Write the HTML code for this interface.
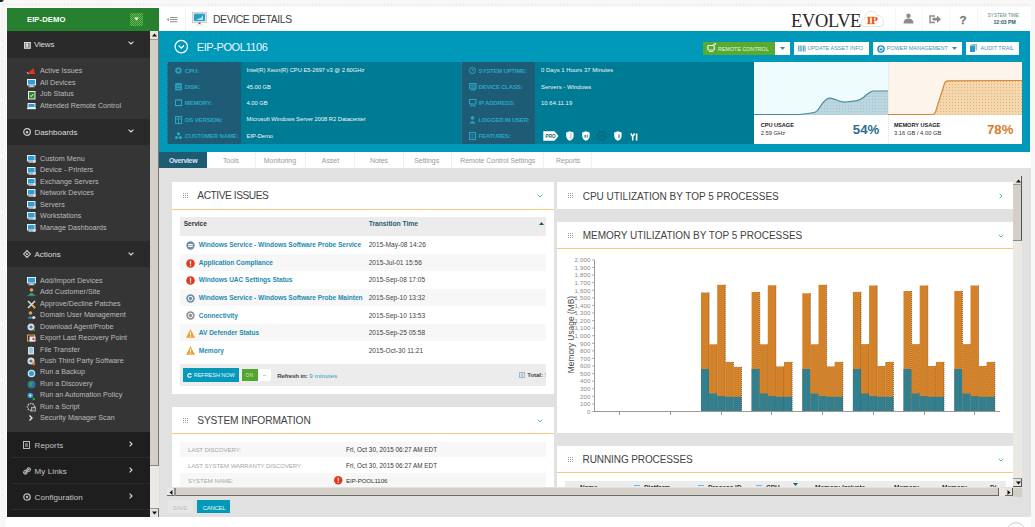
<!DOCTYPE html>
<html><head><meta charset="utf-8">
<style>
*{margin:0;padding:0;box-sizing:border-box}
html,body{width:1035px;height:527px;overflow:hidden;background:#f7f7f7;font-family:"Liberation Sans",sans-serif}
.a{position:absolute}
.t{position:absolute;white-space:nowrap;line-height:1}
svg{overflow:visible}
</style></head><body>
<div class="a" style="left:6px;top:7px;width:1025px;height:520px;background:#fff;"></div>
<div class="a" style="left:3px;top:4px;width:1028px;height:1px;background:transparent;background-image:linear-gradient(90deg,#dedede 1px,transparent 1px);background-size:3.6px 1px"></div>
<div class="a" style="left:2px;top:5px;width:1px;height:522px;background:transparent;background-image:linear-gradient(#e2e2e2 1px,transparent 1px);background-size:1px 7px"></div>
<svg class="a" style="left:0px;top:0px;" width="4" height="3" viewBox="0 0 4 3"><ellipse cx="0.5" cy="0" rx="3" ry="2" fill="#222"/></svg>
<div class="a" style="left:7px;top:8px;width:152px;height:23px;background:#27802f;"></div>
<div class="t" style="left:27px;top:15.93px;font-size:7.7px;color:#fff;font-weight:bold;letter-spacing:0.05px;">EIP-DEMO</div>
<div class="a" style="left:130px;top:13px;width:13px;height:12.5px;background:#45a03d;background:repeating-conic-gradient(#5fba4a 0 25%,#2e8a33 0 50%) 0 0/2px 2px"></div>
<svg class="a" style="left:134px;top:17px;" width="5" height="4" viewBox="0 0 5 4"><path d="M0.3 0.5 H4.7 L2.5 3.5Z" fill="#fff"/></svg>
<div class="a" style="left:7px;top:31px;width:143px;height:27px;background:#2a2a2a;"></div>
<div class="a" style="left:7px;top:58px;width:143px;height:61px;background:#353535;"></div>
<div class="a" style="left:7px;top:119px;width:143px;height:26px;background:#2a2a2a;"></div>
<div class="a" style="left:7px;top:145px;width:143px;height:96px;background:#353535;"></div>
<div class="a" style="left:7px;top:241px;width:143px;height:26px;background:#2a2a2a;"></div>
<div class="a" style="left:7px;top:267px;width:143px;height:165px;background:#353535;"></div>
<div class="a" style="left:7px;top:432px;width:143px;height:85px;background:#1e1e1e;"></div>
<div class="a" style="left:12px;top:457px;width:138px;height:1px;background:transparent;border-top:1px dotted #363636"></div>
<div class="a" style="left:12px;top:483px;width:138px;height:1px;background:transparent;border-top:1px dotted #363636"></div>
<div class="a" style="left:12px;top:509px;width:138px;height:1px;background:transparent;border-top:1px dotted #363636"></div>
<svg class="a" style="left:23.7px;top:41.7px;" width="7" height="7" viewBox="0 0 7 7"><rect x="0.5" y="0.5" width="5.8" height="5.8" fill="#8a8a8a" stroke="#d8d8d8" stroke-width="1"/><rect x="2.3" y="1.5" width="1.6" height="3.8" fill="#e8e8e8"/></svg>
<div class="t" style="left:34px;top:41.38px;font-size:8px;color:#dcdcdc;letter-spacing:-0.2px;">Views</div>
<svg class="a" style="left:127.5px;top:41.0px;" width="6" height="4" viewBox="0 0 6 4"><path d="M0.6 0.6 L3 3 L5.4 0.6" fill="none" stroke="#e0e0e0" stroke-width="1.1"/></svg>
<svg class="a" style="left:23px;top:128px;" width="8" height="8" viewBox="0 0 8 8"><circle cx="4" cy="4" r="3.3" fill="none" stroke="#ccc" stroke-width="1.2"/><circle cx="4" cy="4.3" r="1.2" fill="#ccc"/></svg>
<div class="t" style="left:34.4px;top:129.08px;font-size:8px;color:#dcdcdc;letter-spacing:0px;">Dashboards</div>
<svg class="a" style="left:127.5px;top:128.5px;" width="6" height="4" viewBox="0 0 6 4"><path d="M0.6 0.6 L3 3 L5.4 0.6" fill="none" stroke="#e0e0e0" stroke-width="1.1"/></svg>
<svg class="a" style="left:23px;top:250px;" width="8" height="8" viewBox="0 0 8 8"><path d="M4 0.6 L7.4 4 L4 7.4 L0.6 4Z" fill="none" stroke="#ccc" stroke-width="1.1"/><circle cx="4" cy="4" r="1.1" fill="#ccc"/></svg>
<div class="t" style="left:34.4px;top:251.08px;font-size:8px;color:#dcdcdc;letter-spacing:0px;">Actions</div>
<svg class="a" style="left:127.5px;top:251.5px;" width="6" height="4" viewBox="0 0 6 4"><path d="M0.6 0.6 L3 3 L5.4 0.6" fill="none" stroke="#e0e0e0" stroke-width="1.1"/></svg>
<svg class="a" style="left:23px;top:441px;" width="7" height="8" viewBox="0 0 7 8"><rect x="0.5" y="0.5" width="6" height="7" fill="none" stroke="#bbb" stroke-width="1"/><path d="M2 3H5M2 5H5" stroke="#bbb"/></svg>
<div class="t" style="left:34.6px;top:441.68px;font-size:8px;color:#c6c6c6;letter-spacing:0.1px;">Reports</div>
<svg class="a" style="left:128.5px;top:440.5px;" width="4" height="6" viewBox="0 0 4 6"><path d="M0.6 0.6 L3 3 L0.6 5.4" fill="none" stroke="#e0e0e0" stroke-width="1.1"/></svg>
<svg class="a" style="left:23px;top:467px;" width="8" height="8" viewBox="0 0 8 8"><path d="M1.5 6.5 L6.5 1.5" stroke="#bbb" stroke-width="1.2"/><rect x="0.6" y="3.6" width="3.5" height="3.5" rx="1.5" fill="none" stroke="#bbb" transform="rotate(-45 2.3 5.3)"/><rect x="3.9" y="0.9" width="3.5" height="3.5" rx="1.5" fill="none" stroke="#bbb" transform="rotate(-45 5.6 2.6)"/></svg>
<div class="t" style="left:34.6px;top:467.58px;font-size:8px;color:#c6c6c6;letter-spacing:0.1px;">My Links</div>
<svg class="a" style="left:128.5px;top:466.5px;" width="4" height="6" viewBox="0 0 4 6"><path d="M0.6 0.6 L3 3 L0.6 5.4" fill="none" stroke="#e0e0e0" stroke-width="1.1"/></svg>
<svg class="a" style="left:23px;top:493px;" width="8" height="8" viewBox="0 0 8 8"><circle cx="4" cy="4" r="3.2" fill="none" stroke="#bbb" stroke-width="1.3"/><circle cx="4" cy="4" r="1.2" fill="#bbb"/></svg>
<div class="t" style="left:34.6px;top:493.58px;font-size:8px;color:#c6c6c6;letter-spacing:0.05px;">Configuration</div>
<svg class="a" style="left:128.5px;top:492.5px;" width="4" height="6" viewBox="0 0 4 6"><path d="M0.6 0.6 L3 3 L0.6 5.4" fill="none" stroke="#e0e0e0" stroke-width="1.1"/></svg>
<svg class="a" style="left:27px;top:68px;" width="8" height="6" viewBox="0 0 8 6"><path d="M0 6 L8 6 L6.5 0 Z" fill="#e8321e"/><path d="M0 4 L1.5 6" stroke="#eee" stroke-width="0.8"/></svg>
<div class="t" style="left:40px;top:68.10px;font-size:7.15px;color:#bcbcbc;letter-spacing:0.02px;">Active Issues</div>
<svg class="a" style="left:27px;top:79px;" width="9" height="8" viewBox="0 0 9 8"><rect x="0.5" y="0.5" width="8" height="5.5" fill="#2a9fd6" stroke="#eee" stroke-width="1"/><rect x="3" y="6.5" width="3" height="1" fill="#ddd"/><rect x="1.5" y="7.3" width="6" height="0.9" fill="#eee"/></svg>
<div class="t" style="left:40px;top:79.60px;font-size:7.15px;color:#bcbcbc;letter-spacing:0.02px;">All Devices</div>
<svg class="a" style="left:27.5px;top:90.5px;" width="7" height="8" viewBox="0 0 7 8"><rect x="0.5" y="0.5" width="6.5" height="7.5" fill="#2a8a2a" stroke="#eee" stroke-width="1"/><path d="M2 4.5 L3.2 5.6 L5.3 3" stroke="#fff" fill="none" stroke-width="0.9"/></svg>
<div class="t" style="left:40px;top:91.00px;font-size:7.15px;color:#bcbcbc;letter-spacing:0.02px;">Job Status</div>
<svg class="a" style="left:27px;top:103px;" width="9" height="6" viewBox="0 0 9 6"><rect x="1" y="0.5" width="7" height="4" fill="#2a9fd6" stroke="#eee" stroke-width="1"/><rect x="0" y="5" width="9" height="1.2" fill="#eee"/></svg>
<div class="t" style="left:40px;top:102.80px;font-size:7.15px;color:#bcbcbc;letter-spacing:0.02px;">Attended Remote Control</div>
<svg class="a" style="left:26.5px;top:155.4px;" width="9" height="8" viewBox="0 0 9 8"><rect x="0.5" y="0.5" width="7.5" height="5.5" fill="#2a9fd6" stroke="#eee" stroke-width="1"/><rect x="1.5" y="6.6" width="6" height="1" fill="#eee"/><circle cx="7.5" cy="6.5" r="1.4" fill="#ddd"/></svg>
<div class="t" style="left:40px;top:156.20px;font-size:7.15px;color:#bcbcbc;letter-spacing:0.02px;">Custom Menu</div>
<svg class="a" style="left:26.5px;top:166.5px;" width="9" height="8" viewBox="0 0 9 8"><rect x="0.5" y="0.5" width="7.5" height="5.5" fill="#2a9fd6" stroke="#eee" stroke-width="1"/><rect x="1.5" y="6.6" width="6" height="1" fill="#eee"/><circle cx="7.5" cy="6.5" r="1.4" fill="#ddd"/></svg>
<div class="t" style="left:40px;top:167.30px;font-size:7.15px;color:#bcbcbc;letter-spacing:0.02px;">Device - Printers</div>
<svg class="a" style="left:26.5px;top:178.1px;" width="9" height="8" viewBox="0 0 9 8"><rect x="0.5" y="0.5" width="7.5" height="5.5" fill="#2a9fd6" stroke="#eee" stroke-width="1"/><rect x="1.5" y="6.6" width="6" height="1" fill="#eee"/><circle cx="7.5" cy="6.5" r="1.4" fill="#ddd"/></svg>
<div class="t" style="left:40px;top:178.90px;font-size:7.15px;color:#bcbcbc;letter-spacing:0.02px;">Exchange Servers</div>
<svg class="a" style="left:26.5px;top:189.2px;" width="9" height="8" viewBox="0 0 9 8"><rect x="0.5" y="0.5" width="7.5" height="5.5" fill="#2a9fd6" stroke="#eee" stroke-width="1"/><rect x="1.5" y="6.6" width="6" height="1" fill="#eee"/><circle cx="7.5" cy="6.5" r="1.4" fill="#ddd"/></svg>
<div class="t" style="left:40px;top:190.00px;font-size:7.15px;color:#bcbcbc;letter-spacing:0.02px;">Network Devices</div>
<svg class="a" style="left:26.5px;top:200.9px;" width="9" height="8" viewBox="0 0 9 8"><rect x="0.5" y="0.5" width="7.5" height="5.5" fill="#2a9fd6" stroke="#eee" stroke-width="1"/><rect x="1.5" y="6.6" width="6" height="1" fill="#eee"/><circle cx="7.5" cy="6.5" r="1.4" fill="#ddd"/></svg>
<div class="t" style="left:40px;top:201.70px;font-size:7.15px;color:#bcbcbc;letter-spacing:0.02px;">Servers</div>
<svg class="a" style="left:26.5px;top:212.3px;" width="9" height="8" viewBox="0 0 9 8"><rect x="0.5" y="0.5" width="7.5" height="5.5" fill="#2a9fd6" stroke="#eee" stroke-width="1"/><rect x="1.5" y="6.6" width="6" height="1" fill="#eee"/><circle cx="7.5" cy="6.5" r="1.4" fill="#ddd"/></svg>
<div class="t" style="left:40px;top:213.10px;font-size:7.15px;color:#bcbcbc;letter-spacing:0.02px;">Workstations</div>
<svg class="a" style="left:26.5px;top:223.7px;" width="9" height="8" viewBox="0 0 9 8"><rect x="0.5" y="0.5" width="7.5" height="5.5" fill="#2a9fd6" stroke="#eee" stroke-width="1"/><rect x="1.5" y="6.6" width="6" height="1" fill="#eee"/><circle cx="7.5" cy="6.5" r="1.4" fill="#ddd"/></svg>
<div class="t" style="left:40px;top:224.50px;font-size:7.15px;color:#bcbcbc;letter-spacing:0.02px;">Manage Dashboards</div>
<svg class="a" style="left:26.5px;top:277.1px;" width="9" height="9" viewBox="0 0 9 9"><rect x="0.5" y="0.5" width="8" height="5.5" fill="#2a9fd6" stroke="#eee" stroke-width="1"/><rect x="3" y="6.5" width="3" height="1" fill="#ddd"/><rect x="1.5" y="7.3" width="6" height="0.9" fill="#eee"/></svg>
<div class="t" style="left:40px;top:277.90px;font-size:7.15px;color:#bcbcbc;letter-spacing:0.02px;">Add/Import Devices</div>
<svg class="a" style="left:26.5px;top:288.3px;" width="9" height="9" viewBox="0 0 9 9"><circle cx="4.5" cy="2" r="1.8" fill="#f0a040"/><path d="M1.5 7 Q4.5 3 7.5 7Z" fill="#2a9fd6"/><rect x="0.5" y="7.3" width="8" height="0.8" fill="#3b3"/></svg>
<div class="t" style="left:40px;top:289.10px;font-size:7.15px;color:#bcbcbc;letter-spacing:0.02px;">Add Customer/Site</div>
<svg class="a" style="left:26.5px;top:299.9px;" width="9" height="9" viewBox="0 0 9 9"><path d="M1 1 L8 8 M8 1 L1 8" stroke="#ddd" stroke-width="1.5"/><path d="M5.5 5.5 L8 8" stroke="#f0a040" stroke-width="1.8"/></svg>
<div class="t" style="left:40px;top:300.70px;font-size:7.15px;color:#bcbcbc;letter-spacing:0.02px;">Approve/Decline Patches</div>
<svg class="a" style="left:26.5px;top:311.1px;" width="9" height="9" viewBox="0 0 9 9"><circle cx="3.5" cy="2" r="1.8" fill="#f0a040"/><path d="M0.5 7.5 Q3.5 3.5 6.5 7.5Z" fill="#2a9fd6"/><circle cx="6.8" cy="6.5" r="1.6" fill="#ddd"/></svg>
<div class="t" style="left:40px;top:311.90px;font-size:7.15px;color:#bcbcbc;letter-spacing:0.02px;">Domain User Management</div>
<svg class="a" style="left:26.5px;top:322.9px;" width="9" height="9" viewBox="0 0 9 9"><circle cx="4" cy="4" r="3.5" fill="#ddd"/><circle cx="4" cy="4" r="1.6" fill="#3a7ea8"/><circle cx="7" cy="7" r="1" fill="#3b3"/></svg>
<div class="t" style="left:40px;top:323.70px;font-size:7.15px;color:#bcbcbc;letter-spacing:0.02px;">Download Agent/Probe</div>
<svg class="a" style="left:26.5px;top:334.2px;" width="9" height="9" viewBox="0 0 9 9"><rect x="0.5" y="1" width="7" height="6" fill="none" stroke="#f0a040" stroke-width="1"/><rect x="2.5" y="2.5" width="6" height="5" fill="#eee"/><circle cx="6.5" cy="5" r="1.2" fill="#e33"/></svg>
<div class="t" style="left:40px;top:335.00px;font-size:7.15px;color:#bcbcbc;letter-spacing:0.02px;">Export Last Recovery Point</div>
<svg class="a" style="left:26.5px;top:345.7px;" width="9" height="9" viewBox="0 0 9 9"><rect x="1" y="1" width="6" height="7.5" fill="#cfe3ef"/><rect x="2" y="2" width="4" height="5" fill="#9cc3dc"/><circle cx="4" cy="0.8" r="0.8" fill="#3b3"/></svg>
<div class="t" style="left:40px;top:346.50px;font-size:7.15px;color:#bcbcbc;letter-spacing:0.02px;">File Transfer</div>
<svg class="a" style="left:26.5px;top:356.9px;" width="9" height="9" viewBox="0 0 9 9"><circle cx="4" cy="4" r="3.5" fill="#ddd"/><circle cx="4" cy="4" r="1.6" fill="#3a7ea8"/><circle cx="6.8" cy="6.8" r="1.6" fill="#f07020"/></svg>
<div class="t" style="left:40px;top:357.70px;font-size:7.15px;color:#bcbcbc;letter-spacing:0.02px;">Push Third Party Software</div>
<svg class="a" style="left:26.5px;top:368.5px;" width="9" height="9" viewBox="0 0 9 9"><circle cx="4.5" cy="4.5" r="3.8" fill="#cfe3ef"/><circle cx="4.5" cy="4.5" r="2.5" fill="#2a9fd6"/></svg>
<div class="t" style="left:40px;top:369.30px;font-size:7.15px;color:#bcbcbc;letter-spacing:0.02px;">Run a Backup</div>
<svg class="a" style="left:26.5px;top:380px;" width="9" height="9" viewBox="0 0 9 9"><circle cx="4.5" cy="4.5" r="4" fill="#2f6fa8"/><path d="M2 3 Q4 1 6 3 Q5 6 3 7" fill="#3a3" /></svg>
<div class="t" style="left:40px;top:380.80px;font-size:7.15px;color:#bcbcbc;letter-spacing:0.02px;">Run a Discovery</div>
<svg class="a" style="left:26.5px;top:391.5px;" width="9" height="9" viewBox="0 0 9 9"><circle cx="3.3" cy="3.5" r="2.8" fill="#2a9fd6"/><circle cx="3.3" cy="3.5" r="1" fill="#fff"/><path d="M5.5 6 L8 7 L5.5 8" stroke="#3b3" fill="none" stroke-width="1"/></svg>
<div class="t" style="left:40px;top:392.30px;font-size:7.15px;color:#bcbcbc;letter-spacing:0.02px;">Run an Automation Policy</div>
<svg class="a" style="left:26.5px;top:402.8px;" width="9" height="9" viewBox="0 0 9 9"><circle cx="4" cy="4" r="3.5" fill="none" stroke="#bbb" stroke-width="1.6" stroke-dasharray="1.5 1"/><rect x="4.5" y="4.5" width="4" height="3.5" fill="#555" stroke="#bbb" stroke-width="0.8"/></svg>
<div class="t" style="left:40px;top:403.60px;font-size:7.15px;color:#bcbcbc;letter-spacing:0.02px;">Run a Script</div>
<svg class="a" style="left:26.5px;top:414.3px;" width="9" height="9" viewBox="0 0 9 9"><path d="M2.5 1.5 L5 4 L2.5 6.5" fill="none" stroke="#eee" stroke-width="1.3"/></svg>
<div class="t" style="left:40px;top:415.10px;font-size:7.15px;color:#bcbcbc;letter-spacing:0.02px;">Security Manager Scan</div>
<div class="a" style="left:150px;top:31px;width:9px;height:486px;background:#ebe9e3;background-image:radial-gradient(#d8d5cc 0.6px,transparent 0.7px);background-size:2px 2px"></div>
<div class="a" style="left:150px;top:31px;width:9px;height:435px;background:#d4d0c8;border-right:1px solid #777;border-bottom:1px solid #888"></div>
<div class="a" style="left:150px;top:31px;width:9px;height:9px;background:#e6e3dc;border-bottom:1px solid #999;border-right:1px solid #666"></div>
<svg class="a" style="left:152px;top:33px;" width="5" height="4" viewBox="0 0 5 4"><path d="M0 3.5 L2.5 0.5 L5 3.5Z" fill="#111"/></svg>
<div class="a" style="left:150px;top:508px;width:9px;height:9px;background:#e6e3dc;border-top:1px solid #999;border-right:1px solid #666"></div>
<svg class="a" style="left:152px;top:511px;" width="5" height="4" viewBox="0 0 5 4"><path d="M0 0.5 L2.5 3.5 L5 0.5Z" fill="#111"/></svg>
<div class="a" style="left:159px;top:8px;width:872px;height:23px;background:#fff;"></div>
<div class="a" style="left:159px;top:31px;width:871px;height:121px;background:#0099ba;"></div>
<div class="a" style="left:159px;top:152px;width:872px;height:16px;background:#fff;"></div>
<div class="a" style="left:159px;top:168px;width:872px;height:349px;background:#e1e1e1;"></div>
<svg class="a" style="left:166px;top:16px;" width="12" height="7" viewBox="0 0 12 7"><path d="M0.5 3.5 L3 2 L3 5Z" fill="#999"/><path d="M4 1.5H11.5M4 3.5H11.5M4 5.8H11.5" stroke="#8f8f8f" stroke-width="1.1"/></svg>
<div class="a" style="left:185px;top:9px;width:1px;height:21px;background:transparent;border-left:1px dotted #e6e6e6"></div>
<svg class="a" style="left:192px;top:12px;" width="15" height="14" viewBox="0 0 15 14"><rect x="0.5" y="0.5" width="14" height="10" fill="#e4e4e4" stroke="#cfcfcf" stroke-width="1"/><rect x="2" y="1.8" width="11" height="7.2" rx="1" fill="#22a2c8"/><path d="M4 8 L7 6.5 L9 6 L11 3 L11 8Z" fill="#bfe6f2"/><rect x="6.5" y="10.5" width="2" height="1.5" fill="#666"/><rect x="4" y="12.5" width="7" height="1" fill="#ddd"/></svg>
<div class="t" style="left:213px;top:14.80px;font-size:10.4px;color:#404040;letter-spacing:-0.38px;">DEVICE DETAILS</div>
<div class="t" style="left:791px;top:11.98px;font-size:18.4px;color:#2a2626;letter-spacing:-0.3px;font-family:'Liberation Serif',serif;">EVOLVE</div>
<svg class="a" style="left:860px;top:10px;" width="25" height="18" viewBox="0 0 25 18"><path d="M3.5 16.5 Q0.8 16.5 1.2 13 Q1.6 9.5 4.5 9 Q5.5 1.5 11.5 1.5 Q16 1.5 17.5 5.5 Q22.5 6 23.5 11.5 Q24 16.5 20.5 16.5 Z" fill="#fff" stroke="#c9c4bd" stroke-width="0.8" stroke-dasharray="1 0.6"/></svg>
<div class="t" style="left:866.8px;top:14.51px;font-size:11.4px;color:#e8321e;font-weight:bold;letter-spacing:-0.3px;font-family:'Liberation Serif',serif;-webkit-text-stroke:0.3px #f39a1c;">IP</div>
<div class="a" style="left:895px;top:9px;width:1px;height:21px;background:transparent;border-left:1px dotted #ebebeb"></div>
<div class="a" style="left:922px;top:9px;width:1px;height:21px;background:transparent;border-left:1px dotted #ebebeb"></div>
<div class="a" style="left:949px;top:9px;width:1px;height:21px;background:transparent;border-left:1px dotted #ebebeb"></div>
<div class="a" style="left:977px;top:9px;width:1px;height:21px;background:transparent;border-left:1px dotted #ebebeb"></div>
<svg class="a" style="left:903px;top:13px;" width="11" height="11" viewBox="0 0 11 11"><circle cx="5.5" cy="2.8" r="2.2" fill="#8c8c8c"/><path d="M0.5 10.5 Q0.5 5.6 5.5 5.6 Q10.5 5.6 10.5 10.5Z" fill="#8c8c8c"/></svg>
<svg class="a" style="left:929px;top:15px;" width="13" height="9" viewBox="0 0 13 9"><path d="M6 1 H1 V7.5 H6" fill="none" stroke="#8c8c8c" stroke-width="1.4"/><path d="M3.5 2.8 H8 V0.5 L12 4.2 L8 8 V5.6 H3.5Z" fill="#8c8c8c"/></svg>
<div class="t" style="left:959.6px;top:13.72px;font-size:11.6px;color:#7c7c7c;font-weight:bold;-webkit-text-stroke:0.3px #7c7c7c;">?</div>
<div class="t" style="left:987.8px;top:13.55px;font-size:4.6px;color:#6b7f88;">SYSTEM TIME</div>
<div class="t" style="left:993.4px;top:20.25px;font-size:5.2px;color:#1f5a73;font-weight:bold;">12:03 PM</div>
<svg class="a" style="left:174px;top:39px;" width="15" height="15" viewBox="0 0 15 15"><circle cx="7.3" cy="7.6" r="6.2" fill="none" stroke="#fff" stroke-width="1.3"/><path d="M4.6 6.5 L7.3 9.1 L10 6.5" fill="none" stroke="#fff" stroke-width="1.3"/></svg>
<div class="t" style="left:196.8px;top:42.21px;font-size:11px;color:#eef7fa;letter-spacing:-0.42px;">EIP-POOL1106</div>
<div class="a" style="left:703px;top:41.5px;width:72px;height:13px;background:#57ab30;"></div>
<svg class="a" style="left:706.5px;top:43px;" width="10" height="10" viewBox="0 0 10 10"><rect x="0.8" y="2.5" width="6.5" height="4.5" rx="1" fill="none" stroke="#eee" stroke-width="1.2"/><path d="M2 8.5 H6.5" stroke="#ddd" stroke-width="1"/><path d="M5 2.8 Q6 0.8 8.5 1 M7.5 0 L9 1 L7.6 2.2" fill="none" stroke="#eee" stroke-width="0.9"/></svg>
<div class="t" style="left:718px;top:47.00px;font-size:5.3px;color:#eaf2e4;letter-spacing:0.05px;">REMOTE CONTROL</div>
<div class="a" style="left:775px;top:41.5px;width:15px;height:13px;background:#fff;"></div>
<svg class="a" style="left:780px;top:46.5px;" width="5" height="3" viewBox="0 0 5 3"><path d="M0 0 L5 0 L2.5 3Z" fill="#2f8db0"/></svg>
<div class="a" style="left:794px;top:41.5px;width:75px;height:13px;background:#fff;"></div>
<svg class="a" style="left:798px;top:44.5px;" width="8" height="7" viewBox="0 0 8 7"><path d="M0.7 0.5V6.5M2.2 0.5V6.5M3.8 0.5V6.5M5.6 0.5V6.5M7 0.5V6.5" stroke="#4a9fbd" stroke-width="1"/></svg>
<div class="t" style="left:807.4px;top:46.30px;font-size:5.5px;color:#4a93ad;">UPDATE ASSET INFO</div>
<div class="a" style="left:873px;top:41.5px;width:89px;height:13px;background:#fff;"></div>
<svg class="a" style="left:876.5px;top:44.7px;" width="8" height="8" viewBox="0 0 8 8"><circle cx="4" cy="4" r="3.8" fill="#1f90b8"/><circle cx="4" cy="4" r="2" fill="none" stroke="#fff" stroke-width="0.9"/><path d="M4 1.5V4" stroke="#fff" stroke-width="0.9"/></svg>
<div class="t" style="left:886.8px;top:46.30px;font-size:5.5px;color:#4a93ad;letter-spacing:-0.05px;">POWER MANAGEMENT</div>
<svg class="a" style="left:952px;top:47px;" width="5" height="3" viewBox="0 0 5 3"><path d="M0 0 L5 0 L2.5 3Z" fill="#2f8db0"/></svg>
<div class="a" style="left:966px;top:41.5px;width:53px;height:13px;background:#fff;"></div>
<svg class="a" style="left:970px;top:44px;" width="7" height="8" viewBox="0 0 7 8"><path d="M0 1.5 H5 V8 H0Z" fill="#2f98bd"/><path d="M1.5 0 H7 V6.5 H5.5 V1.5 H1.5Z" fill="#7fc0d8"/></svg>
<div class="t" style="left:980.5px;top:46.30px;font-size:5.5px;color:#4a93ad;">AUDIT TRAIL</div>
<div class="a" style="left:167px;top:62px;width:74px;height:82px;background:#1d5c74;border-left:1px dotted #3b8299"></div>
<div class="a" style="left:241px;top:62px;width:220px;height:82px;background:#007b95;"></div>
<div class="a" style="left:461px;top:62px;width:74px;height:82px;background:#1d5c74;border-left:1px dotted #3b8299"></div>
<div class="a" style="left:535px;top:62px;width:219px;height:82px;background:#007b95;"></div>
<svg class="a" style="left:174.7px;top:66.9px;" width="7" height="8" viewBox="0 0 7 8"><circle cx="3.5" cy="3.5" r="3.3" fill="#2a9cbc"/><circle cx="3.5" cy="3.5" r="1.3" fill="#1f5a73"/></svg>
<div class="t" style="left:184.7px;top:68.06px;font-size:6px;color:#2aa6c6;font-weight:bold;letter-spacing:-0.12px;">CPU:</div>
<div class="t" style="left:246.6px;top:68.46px;font-size:5.8px;color:#f2f7f9;letter-spacing:-0.04px;">Intel(R) Xeon(R) CPU E5-2697 v3 @ 2.60GHz</div>
<svg class="a" style="left:468.9px;top:66.9px;" width="8" height="8" viewBox="0 0 8 8"><circle cx="3.5" cy="3.5" r="3" fill="none" stroke="#2aa6c6" stroke-width="1"/><path d="M3.5 1.8V3.6H5" stroke="#2aa6c6" stroke-width="0.8" fill="none"/></svg>
<div class="t" style="left:478.6px;top:68.06px;font-size:6px;color:#2aa6c6;font-weight:bold;letter-spacing:-0.2px;">SYSTEM UPTIME:</div>
<div class="t" style="left:541px;top:68.41px;font-size:5.9px;color:#f2f7f9;letter-spacing:0.05px;">0 Days 1 Hours 37 Minutes</div>
<svg class="a" style="left:174.7px;top:83.0px;" width="7" height="8" viewBox="0 0 7 8"><rect x="0" y="0" width="7" height="7.5" rx="1.2" fill="#2a9cbc"/><path d="M1.5 3H5.5M1.5 5.5H5.5" stroke="#1f5a73" stroke-width="0.7"/></svg>
<div class="t" style="left:184.7px;top:84.16px;font-size:6px;color:#2aa6c6;font-weight:bold;letter-spacing:-0.12px;">DISK:</div>
<div class="t" style="left:246.6px;top:84.56px;font-size:5.8px;color:#f2f7f9;letter-spacing:-0.04px;">45.00 GB</div>
<svg class="a" style="left:468.9px;top:83.0px;" width="8" height="8" viewBox="0 0 8 8"><rect x="0.5" y="0.5" width="6.5" height="5.5" fill="none" stroke="#2aa6c6" stroke-width="1"/><path d="M0.5 2.3H7M0.5 4H7M3 0.5V6M5 0.5V6" stroke="#2aa6c6" stroke-width="0.6"/><path d="M2 7H6" stroke="#2aa6c6"/></svg>
<div class="t" style="left:478.6px;top:84.16px;font-size:6px;color:#2aa6c6;font-weight:bold;letter-spacing:-0.2px;">DEVICE CLASS:</div>
<div class="t" style="left:541px;top:84.51px;font-size:5.9px;color:#f2f7f9;letter-spacing:0.05px;">Servers - Windows</div>
<svg class="a" style="left:174.7px;top:99.10000000000001px;" width="7" height="8" viewBox="0 0 7 8"><rect x="0.5" y="1" width="6" height="5.5" fill="none" stroke="#2aa6c6" stroke-width="1"/><path d="M2 0V1M3.5 0V1M5 0V1M2 6.5V7.5M5 6.5V7.5" stroke="#2aa6c6" stroke-width="0.7"/></svg>
<div class="t" style="left:184.7px;top:100.26px;font-size:6px;color:#2aa6c6;font-weight:bold;letter-spacing:-0.12px;">MEMORY:</div>
<div class="t" style="left:246.6px;top:100.66px;font-size:5.8px;color:#f2f7f9;letter-spacing:-0.04px;">4.00 GB</div>
<svg class="a" style="left:468.9px;top:99.10000000000001px;" width="8" height="8" viewBox="0 0 8 8"><rect x="0.5" y="0.5" width="6.5" height="4.5" fill="none" stroke="#2aa6c6" stroke-width="1"/><path d="M2 6.5H6M1 7.5H2.5M5 7.5H6.5" stroke="#2aa6c6" stroke-width="0.8"/></svg>
<div class="t" style="left:478.6px;top:100.26px;font-size:6px;color:#2aa6c6;font-weight:bold;letter-spacing:-0.2px;">IP ADDRESS:</div>
<div class="t" style="left:541px;top:100.61px;font-size:5.9px;color:#f2f7f9;letter-spacing:0.05px;">10.64.11.19</div>
<svg class="a" style="left:174.7px;top:115.7px;" width="7" height="8" viewBox="0 0 7 8"><rect x="0.5" y="0.5" width="6" height="7" fill="none" stroke="#2aa6c6" stroke-width="1"/><path d="M3.5 0.5V7.5M0.5 3H6.5" stroke="#2aa6c6" stroke-width="0.8"/></svg>
<div class="t" style="left:184.7px;top:116.86px;font-size:6px;color:#2aa6c6;font-weight:bold;letter-spacing:-0.12px;">OS VERSION:</div>
<div class="t" style="left:246.6px;top:117.26px;font-size:5.8px;color:#f2f7f9;letter-spacing:-0.04px;">Microsoft Windows Server 2008 R2 Datacenter</div>
<svg class="a" style="left:468.9px;top:115.7px;" width="8" height="8" viewBox="0 0 8 8"><circle cx="3.5" cy="2" r="1.8" fill="#2aa6c6"/><path d="M0.3 7.5 Q3.5 2.8 6.7 7.5Z" fill="#2aa6c6"/></svg>
<div class="t" style="left:478.6px;top:116.86px;font-size:6px;color:#2aa6c6;font-weight:bold;letter-spacing:-0.2px;">LOGGED IN USER:</div>
<svg class="a" style="left:174.7px;top:132.0px;" width="7" height="8" viewBox="0 0 7 8"><circle cx="3.5" cy="1.8" r="1.6" fill="#2aa6c6"/><circle cx="1.6" cy="5.5" r="1.6" fill="#2aa6c6"/><circle cx="5.4" cy="5.5" r="1.6" fill="#2aa6c6"/></svg>
<div class="t" style="left:184.7px;top:133.16px;font-size:6px;color:#2aa6c6;font-weight:bold;letter-spacing:-0.12px;">CUSTOMER NAME:</div>
<div class="t" style="left:246.6px;top:133.56px;font-size:5.8px;color:#f2f7f9;letter-spacing:-0.04px;">EIP-Demo</div>
<svg class="a" style="left:468.9px;top:132.0px;" width="8" height="8" viewBox="0 0 8 8"><rect x="0.5" y="0.5" width="6" height="7" fill="none" stroke="#2aa6c6" stroke-width="1"/><path d="M2 2.5H5M2 4H5M2 5.5H5" stroke="#2aa6c6" stroke-width="0.6"/></svg>
<div class="t" style="left:478.6px;top:133.16px;font-size:6px;color:#2aa6c6;font-weight:bold;letter-spacing:-0.2px;">FEATURES:</div>
<svg class="a" style="left:543.3px;top:130.8px;" width="16" height="10" viewBox="0 0 16 10"><path d="M0.3 0.3 H11.5 L15.5 5 L11.5 9.7 H0.3Z" fill="#fff"/><text x="2.6" y="6.9" font-size="4.6" font-weight="bold" fill="#1f5a73" font-family="Liberation Sans">PRO</text></svg>
<svg class="a" style="left:565.8px;top:130.7px;" width="8" height="10" viewBox="0 0 8 10"><path d="M3.9 0.3 L7.6 1.6 V5 Q7.6 8.2 3.9 9.8 Q0.2 8.2 0.2 5 V1.6Z" fill="#fff"/><path d="M5 1.5 V8.5" stroke="#9fd3e2" stroke-width="1.2"/></svg>
<svg class="a" style="left:581.8px;top:130.7px;" width="8" height="10" viewBox="0 0 8 10"><path d="M3.9 0.3 L7.6 1.6 V5 Q7.6 8.2 3.9 9.8 Q0.2 8.2 0.2 5 V1.6Z" fill="#fff"/><path d="M4.6 3 L6 4 V6.5 L4.6 7.3Z" fill="#5fb0c8"/><rect x="2.5" y="4" width="1.2" height="2.5" fill="#047891"/></svg>
<svg class="a" style="left:597px;top:131px;" width="9.5" height="10" viewBox="0 0 9.5 10"><circle cx="4.75" cy="5" r="4.1" fill="none" stroke="#1d5369" stroke-width="1.1" stroke-dasharray="1.6 0.9"/><path d="M3.2 5 L4.75 3.5 L6.3 5 L4.75 6.5Z" fill="none" stroke="#1d5369" stroke-width="0.8"/></svg>
<svg class="a" style="left:613.6px;top:130.7px;" width="8" height="10" viewBox="0 0 8 10"><path d="M3.9 0.3 L7.6 1.6 V5 Q7.6 8.2 3.9 9.8 Q0.2 8.2 0.2 5 V1.6Z" fill="#fff"/><path d="M4.2 3 L6.2 4.2 V6.4 L4.2 7.5Z" fill="#6bb6cc"/></svg>
<svg class="a" style="left:629.6px;top:132.5px;" width="8" height="8" viewBox="0 0 8 8"><path d="M0.8 0.5 L2.7 3.6 L4.6 0.5 M2.7 3.6 V7.5" stroke="#fff" stroke-width="1.5" fill="none"/><path d="M6.6 0.5 V7.5" stroke="#fff" stroke-width="1.6"/></svg>
<div class="a" style="left:754px;top:62px;width:134px;height:52.5px;background:#effcfe;"></div>
<svg class="a" style="left:754px;top:62px;" width="134" height="53" viewBox="0 0 134 53"><defs><pattern id="pc" width="3" height="3" patternUnits="userSpaceOnUse"><rect width="3" height="3" fill="#bcd6df"/><rect x="1" y="1" width="1" height="1" fill="#a3c4d0"/></pattern></defs><path d="M0 52.5 L45 52.5 Q52 52 60 50.5 Q63 50 66 45 Q71 37 75 36.2 Q78 36 82 37.8 Q88 40.5 92 40 L103 38.6 Q106 38 110 35 Q115 30 119 29 L134 29 L134 53 L0 53Z" fill="url(#pc)"/><path d="M0 52.5 L45 52.5 Q52 52 60 50.5 Q63 50 66 45 Q71 37 75 36.2 Q78 36 82 37.8 Q88 40.5 92 40 L103 38.6 Q106 38 110 35 Q115 30 119 29 L134 29" fill="none" stroke="#4a87a0" stroke-width="1.2"/></svg>
<div class="a" style="left:754px;top:114.5px;width:134px;height:29.5px;background:#fff;"></div>
<div class="t" style="left:760.7px;top:122.76px;font-size:5.6px;color:#222;font-weight:bold;">CPU USAGE</div>
<div class="t" style="left:760.7px;top:130.66px;font-size:5.8px;color:#333;">2.59 GHz</div>
<div class="t" style="left:852.8px;top:122.93px;font-size:13.2px;color:#2d6e8c;font-weight:bold;">54%</div>
<div class="a" style="left:888px;top:62px;width:134px;height:52.5px;background:#fdf5ec;border-left:1px dotted #e6dccf"></div>
<svg class="a" style="left:888px;top:62px;" width="134" height="53" viewBox="0 0 134 53"><defs><pattern id="pm" width="3" height="3" patternUnits="userSpaceOnUse"><rect width="3" height="3" fill="#f5d7ae"/><rect x="1" y="1" width="1" height="1" fill="#e2b27c"/></pattern></defs><path d="M0 52.5 L45 52.5 Q46.5 52.5 47.5 50 L56.5 21.5 Q57.5 18.8 60 18.8 L134 18.5 L134 53 L0 53Z" fill="url(#pm)"/><path d="M0 52.5 L45 52.5 Q46.5 52.5 47.5 50 L56.5 21.5 Q57.5 18.8 60 18.8 L134 18.5" fill="none" stroke="#d5873a" stroke-width="1.2"/></svg>
<div class="a" style="left:888px;top:114.5px;width:134px;height:29.5px;background:#fff;border-left:1px dotted #e0e0e0"></div>
<div class="t" style="left:894px;top:122.76px;font-size:5.6px;color:#222;font-weight:bold;">MEMORY USAGE</div>
<div class="t" style="left:894px;top:130.66px;font-size:5.8px;color:#333;">3.16 GB / 4.00 GB</div>
<div class="t" style="left:987px;top:122.93px;font-size:13.2px;color:#d57d27;font-weight:bold;">78%</div>
<div class="a" style="left:159px;top:152px;width:48px;height:16px;background:#1f5a73;"></div>
<div class="t" style="left:168.9px;top:157.27px;font-size:7px;color:#dbe7ec;font-weight:bold;letter-spacing:-0.35px;">Overview</div>
<div class="a" style="left:255px;top:153px;width:1px;height:14px;background:transparent;border-left:1px dotted #e4e4e4"></div>
<div class="a" style="left:305px;top:153px;width:1px;height:14px;background:transparent;border-left:1px dotted #e4e4e4"></div>
<div class="a" style="left:354px;top:153px;width:1px;height:14px;background:transparent;border-left:1px dotted #e4e4e4"></div>
<div class="a" style="left:403px;top:153px;width:1px;height:14px;background:transparent;border-left:1px dotted #e4e4e4"></div>
<div class="a" style="left:451px;top:153px;width:1px;height:14px;background:transparent;border-left:1px dotted #e4e4e4"></div>
<div class="a" style="left:543px;top:153px;width:1px;height:14px;background:transparent;border-left:1px dotted #e4e4e4"></div>
<div class="a" style="left:591px;top:153px;width:1px;height:14px;background:transparent;border-left:1px dotted #e4e4e4"></div>
<div class="t" style="left:222.9px;top:157.27px;font-size:7px;color:#9a9a9a;letter-spacing:-0.05px;">Tools</div>
<div class="t" style="left:263.8px;top:157.27px;font-size:7px;color:#9a9a9a;letter-spacing:-0.05px;">Monitoring</div>
<div class="t" style="left:321.8px;top:157.27px;font-size:7px;color:#9a9a9a;letter-spacing:-0.05px;">Asset</div>
<div class="t" style="left:370px;top:157.27px;font-size:7px;color:#9a9a9a;letter-spacing:-0.05px;">Notes</div>
<div class="t" style="left:414.2px;top:157.27px;font-size:7px;color:#9a9a9a;letter-spacing:-0.05px;">Settings</div>
<div class="t" style="left:460.2px;top:157.27px;font-size:7px;color:#9a9a9a;letter-spacing:-0.05px;">Remote Control Settings</div>
<div class="t" style="left:556.1px;top:157.27px;font-size:7px;color:#9a9a9a;letter-spacing:-0.05px;">Reports</div>
<div class="a" style="left:172px;top:182px;width:382px;height:212px;background:#fff;"></div>
<svg class="a" style="left:183px;top:193px;" width="6" height="6" viewBox="0 0 6 6"><rect x="0" y="0" width="1" height="1" fill="#9a9a9a"/><rect x="0" y="2" width="1" height="1" fill="#9a9a9a"/><rect x="0" y="4" width="1" height="1" fill="#9a9a9a"/><rect x="2" y="0" width="1" height="1" fill="#9a9a9a"/><rect x="2" y="2" width="1" height="1" fill="#9a9a9a"/><rect x="2" y="4" width="1" height="1" fill="#9a9a9a"/><rect x="4" y="0" width="1" height="1" fill="#9a9a9a"/><rect x="4" y="2" width="1" height="1" fill="#9a9a9a"/><rect x="4" y="4" width="1" height="1" fill="#9a9a9a"/></svg>
<div class="t" style="left:197.3px;top:191.20px;font-size:10.2px;color:#424242;letter-spacing:-0.45px;">ACTIVE ISSUES</div>
<svg class="a" style="left:537px;top:193.5px;" width="6" height="4" viewBox="0 0 6 4"><path d="M0.6 0.6 L3 3 L5.4 0.6" fill="none" stroke="#5cb3d0" stroke-width="1"/></svg>
<div class="a" style="left:172px;top:209px;width:382px;height:1px;background:#fcc67b;"></div>
<div class="a" style="left:180px;top:217px;width:366px;height:19px;background:#ececec;"></div>
<div class="t" style="left:183.7px;top:220.81px;font-size:6.5px;color:#333;font-weight:bold;">Service</div>
<div class="t" style="left:368.7px;top:220.77px;font-size:6.8px;color:#2a5f75;font-weight:bold;letter-spacing:-0.05px;">Transition Time</div>
<svg class="a" style="left:538.5px;top:221.5px;" width="5" height="3" viewBox="0 0 5 3"><path d="M0 3 L2.5 0 L5 3Z" fill="#1f5a73"/></svg>
<svg class="a" style="left:185.5px;top:241.1px;" width="9" height="9" viewBox="0 0 9 9"><circle cx="4.5" cy="4.5" r="4.2" fill="#6f8da0"/><rect x="2.3" y="3" width="4.4" height="3" fill="#fff"/><path d="M2.3 4.5H6.7" stroke="#6f8da0" stroke-width="0.7"/></svg>
<div class="t" style="left:198.8px;top:242.39px;font-size:6.55px;color:#1f8bb0;font-weight:bold;letter-spacing:-0.02px;">Windows Service - Windows Software Probe Service</div>
<div class="t" style="left:368.7px;top:242.37px;font-size:6.6px;color:#454545;">2015-May-08 14:26</div>
<div class="a" style="left:180px;top:253.6px;width:366px;height:17.6px;background:#f7f7f7;"></div>
<svg class="a" style="left:185.5px;top:258.65000000000003px;" width="9" height="9" viewBox="0 0 9 9"><circle cx="4.5" cy="4.5" r="4.3" fill="#e8371f"/><rect x="3.9" y="1.8" width="1.2" height="3.6" fill="#fff"/><rect x="3.9" y="6.1" width="1.2" height="1.1" fill="#fff"/></svg>
<div class="t" style="left:198.8px;top:259.94px;font-size:6.55px;color:#1f8bb0;font-weight:bold;letter-spacing:-0.02px;">Application Compliance</div>
<div class="t" style="left:368.7px;top:259.92px;font-size:6.6px;color:#454545;">2015-Jul-01 15:56</div>
<svg class="a" style="left:185.5px;top:276.20000000000005px;" width="9" height="9" viewBox="0 0 9 9"><circle cx="4.5" cy="4.5" r="4.3" fill="#e8371f"/><rect x="3.9" y="1.8" width="1.2" height="3.6" fill="#fff"/><rect x="3.9" y="6.1" width="1.2" height="1.1" fill="#fff"/></svg>
<div class="t" style="left:198.8px;top:277.49px;font-size:6.55px;color:#1f8bb0;font-weight:bold;letter-spacing:-0.02px;">Windows UAC Settings Status</div>
<div class="t" style="left:368.7px;top:277.47px;font-size:6.6px;color:#454545;">2015-Sep-08 17:05</div>
<div class="a" style="left:180px;top:288.6px;width:366px;height:17.6px;background:#f7f7f7;"></div>
<svg class="a" style="left:185.5px;top:293.75px;" width="9" height="9" viewBox="0 0 9 9"><circle cx="4.5" cy="4.5" r="4.2" fill="#6f8da0"/><circle cx="4.5" cy="4.5" r="2.2" fill="none" stroke="#fff" stroke-width="1"/></svg>
<div class="t" style="left:198.8px;top:295.04px;font-size:6.55px;color:#1f8bb0;font-weight:bold;letter-spacing:-0.02px;">Windows Service - Windows Software Probe Mainten</div>
<div class="t" style="left:368.7px;top:295.02px;font-size:6.6px;color:#454545;">2015-Sep-10 13:32</div>
<svg class="a" style="left:185.5px;top:311.3px;" width="9" height="9" viewBox="0 0 9 9"><circle cx="4.5" cy="4.5" r="4.2" fill="#8f8f8f"/><circle cx="4.5" cy="4.5" r="2.2" fill="none" stroke="#fff" stroke-width="1"/></svg>
<div class="t" style="left:198.8px;top:312.59px;font-size:6.55px;color:#1f8bb0;font-weight:bold;letter-spacing:-0.02px;">Connectivity</div>
<div class="t" style="left:368.7px;top:312.57px;font-size:6.6px;color:#454545;">2015-Sep-10 13:53</div>
<div class="a" style="left:180px;top:323.8px;width:366px;height:17.6px;background:#f7f7f7;"></div>
<svg class="a" style="left:185.5px;top:328.85px;" width="9" height="9" viewBox="0 0 9 9"><path d="M4.5 0.3 L9 8.7 L0 8.7Z" fill="#f0a030"/><rect x="4" y="3" width="1" height="3.2" fill="#fff"/><rect x="4" y="6.8" width="1" height="1" fill="#fff"/></svg>
<div class="t" style="left:198.8px;top:330.14px;font-size:6.55px;color:#1f8bb0;font-weight:bold;letter-spacing:-0.02px;">AV Defender Status</div>
<div class="t" style="left:368.7px;top:330.12px;font-size:6.6px;color:#454545;">2015-Sep-25 05:58</div>
<svg class="a" style="left:185.5px;top:346.40000000000003px;" width="9" height="9" viewBox="0 0 9 9"><path d="M4.5 0.3 L9 8.7 L0 8.7Z" fill="#f0a030"/><rect x="4" y="3" width="1" height="3.2" fill="#fff"/><rect x="4" y="6.8" width="1" height="1" fill="#fff"/></svg>
<div class="t" style="left:198.8px;top:347.69px;font-size:6.55px;color:#1f8bb0;font-weight:bold;letter-spacing:-0.02px;">Memory</div>
<div class="t" style="left:368.7px;top:347.67px;font-size:6.6px;color:#454545;">2015-Oct-30 11:21</div>
<div class="a" style="left:180px;top:364px;width:366px;height:22px;background:#ececec;"></div>
<div class="a" style="left:183px;top:368px;width:56px;height:13.5px;background:#069aba;"></div>
<svg class="a" style="left:187px;top:372.5px;" width="5" height="5" viewBox="0 0 5 5"><path d="M4.2 1.2 A1.9 1.9 0 1 0 4.4 3.3" fill="none" stroke="#fff" stroke-width="1.1"/><path d="M3.3 0 L4.8 1.6 L3 2Z" fill="#fff"/></svg>
<div class="t" style="left:193.8px;top:372.56px;font-size:5.6px;color:#e8f5f9;letter-spacing:-0.1px;">REFRESH NOW</div>
<div class="a" style="left:242px;top:369px;width:16px;height:12px;background:#52a52e;"></div>
<div class="a" style="left:258px;top:369px;width:13px;height:12px;background:#fff;border-radius:0 2px 2px 0"></div>
<div class="t" style="left:245.5px;top:372.75px;font-size:5px;color:#cde8bf;">ON</div>
<div class="a" style="left:262.5px;top:375px;width:3px;height:1px;background:#b8cfe0;"></div>
<div class="t" style="left:277.3px;top:372.86px;font-size:6.2px;color:#444;font-weight:bold;letter-spacing:-0.2px;">Refresh in:</div>
<div class="t" style="left:309.3px;top:372.56px;font-size:6.2px;color:#2a9ac0;letter-spacing:0.12px;">9 minutes</div>
<svg class="a" style="left:519px;top:372.3px;" width="6" height="6" viewBox="0 0 6 6"><rect x="0.5" y="0.5" width="5" height="5" fill="#dde9ef" stroke="#9ab" stroke-width="0.8"/><path d="M3 1.2V4.8" stroke="#4aa3c8" stroke-width="0.8"/></svg>
<div class="t" style="left:527.3px;top:372.31px;font-size:6.1px;color:#444;font-weight:bold;letter-spacing:-0.1px;">Total:</div>
<div class="t" style="left:544.3px;top:372.31px;font-size:6.1px;color:#2a9ac0;width:2px;overflow:hidden">7</div>
<div class="a" style="left:172px;top:406.7px;width:382px;height:111px;background:#fff;"></div>
<svg class="a" style="left:183px;top:417.5px;" width="6" height="6" viewBox="0 0 6 6"><rect x="0" y="0" width="1" height="1" fill="#9a9a9a"/><rect x="0" y="2" width="1" height="1" fill="#9a9a9a"/><rect x="0" y="4" width="1" height="1" fill="#9a9a9a"/><rect x="2" y="0" width="1" height="1" fill="#9a9a9a"/><rect x="2" y="2" width="1" height="1" fill="#9a9a9a"/><rect x="2" y="4" width="1" height="1" fill="#9a9a9a"/><rect x="4" y="0" width="1" height="1" fill="#9a9a9a"/><rect x="4" y="2" width="1" height="1" fill="#9a9a9a"/><rect x="4" y="4" width="1" height="1" fill="#9a9a9a"/></svg>
<div class="t" style="left:197.2px;top:415.90px;font-size:10.2px;color:#424242;letter-spacing:-0.1px;">SYSTEM INFORMATION</div>
<svg class="a" style="left:537px;top:418.5px;" width="6" height="4" viewBox="0 0 6 4"><path d="M0.6 0.6 L3 3 L5.4 0.6" fill="none" stroke="#5cb3d0" stroke-width="1"/></svg>
<div class="a" style="left:172px;top:433px;width:382px;height:1px;background:#fcc67b;"></div>
<div class="a" style="left:180px;top:442px;width:366px;height:15.3px;background:#f7f7f7;"></div>
<div class="a" style="left:180px;top:472.7px;width:366px;height:20px;background:#f7f7f7;"></div>
<div class="t" style="left:188.1px;top:447.36px;font-size:6px;color:#a6a6a6;letter-spacing:-0.02px;">LAST DISCOVERY:</div>
<div class="t" style="left:346px;top:447.21px;font-size:6.3px;color:#333;letter-spacing:0.05px;">Fri, Oct 30, 2015 06:27 AM EDT</div>
<div class="t" style="left:188.1px;top:462.86px;font-size:6px;color:#a6a6a6;letter-spacing:-0.03px;">LAST SYSTEM WARRANTY DISCOVERY:</div>
<div class="t" style="left:346px;top:462.71px;font-size:6.3px;color:#333;letter-spacing:0.05px;">Fri, Oct 30, 2015 06:27 AM EDT</div>
<div class="t" style="left:188.1px;top:478.26px;font-size:6px;color:#a6a6a6;">SYSTEM NAME:</div>
<svg class="a" style="left:333.5px;top:476.2px;" width="8.5" height="8.5" viewBox="0 0 8.5 8.5"><circle cx="4.25" cy="4.25" r="4.2" fill="#e8371f"/><rect x="3.7" y="1.7" width="1.1" height="3.3" fill="#fff"/><rect x="3.7" y="5.7" width="1.1" height="1" fill="#fff"/></svg>
<div class="t" style="left:346px;top:478.16px;font-size:6.2px;color:#333;letter-spacing:-0.1px;">EIP-POOL1106</div>
<div class="a" style="left:557px;top:182px;width:456px;height:27px;background:#fff;"></div>
<svg class="a" style="left:568px;top:193px;" width="6" height="6" viewBox="0 0 6 6"><rect x="0" y="0" width="1" height="1" fill="#9a9a9a"/><rect x="0" y="2" width="1" height="1" fill="#9a9a9a"/><rect x="0" y="4" width="1" height="1" fill="#9a9a9a"/><rect x="2" y="0" width="1" height="1" fill="#9a9a9a"/><rect x="2" y="2" width="1" height="1" fill="#9a9a9a"/><rect x="2" y="4" width="1" height="1" fill="#9a9a9a"/><rect x="4" y="0" width="1" height="1" fill="#9a9a9a"/><rect x="4" y="2" width="1" height="1" fill="#9a9a9a"/><rect x="4" y="4" width="1" height="1" fill="#9a9a9a"/></svg>
<div class="t" style="left:582.7px;top:191.70px;font-size:10px;color:#424242;letter-spacing:-0.01px;">CPU UTILIZATION BY TOP 5 PROCESSES</div>
<svg class="a" style="left:999px;top:193px;" width="4" height="6" viewBox="0 0 4 6"><path d="M0.6 0.6 L3 3 L0.6 5.4" fill="none" stroke="#5cb3d0" stroke-width="1"/></svg>
<div class="a" style="left:557px;top:222px;width:456px;height:211px;background:#fff;"></div>
<svg class="a" style="left:568px;top:232.5px;" width="6" height="6" viewBox="0 0 6 6"><rect x="0" y="0" width="1" height="1" fill="#9a9a9a"/><rect x="0" y="2" width="1" height="1" fill="#9a9a9a"/><rect x="0" y="4" width="1" height="1" fill="#9a9a9a"/><rect x="2" y="0" width="1" height="1" fill="#9a9a9a"/><rect x="2" y="2" width="1" height="1" fill="#9a9a9a"/><rect x="2" y="4" width="1" height="1" fill="#9a9a9a"/><rect x="4" y="0" width="1" height="1" fill="#9a9a9a"/><rect x="4" y="2" width="1" height="1" fill="#9a9a9a"/><rect x="4" y="4" width="1" height="1" fill="#9a9a9a"/></svg>
<div class="t" style="left:582.7px;top:231.20px;font-size:10px;color:#424242;letter-spacing:-0.01px;">MEMORY UTILIZATION BY TOP 5 PROCESSES</div>
<svg class="a" style="left:998px;top:233.5px;" width="6" height="4" viewBox="0 0 6 4"><path d="M0.6 0.6 L3 3 L5.4 0.6" fill="none" stroke="#5cb3d0" stroke-width="1"/></svg>
<div class="a" style="left:557px;top:248px;width:456px;height:1px;background:#fcc67b;"></div>
<div class="a" style="left:557px;top:446px;width:456px;height:71px;background:#fff;"></div>
<svg class="a" style="left:568px;top:456.5px;" width="6" height="6" viewBox="0 0 6 6"><rect x="0" y="0" width="1" height="1" fill="#9a9a9a"/><rect x="0" y="2" width="1" height="1" fill="#9a9a9a"/><rect x="0" y="4" width="1" height="1" fill="#9a9a9a"/><rect x="2" y="0" width="1" height="1" fill="#9a9a9a"/><rect x="2" y="2" width="1" height="1" fill="#9a9a9a"/><rect x="2" y="4" width="1" height="1" fill="#9a9a9a"/><rect x="4" y="0" width="1" height="1" fill="#9a9a9a"/><rect x="4" y="2" width="1" height="1" fill="#9a9a9a"/><rect x="4" y="4" width="1" height="1" fill="#9a9a9a"/></svg>
<div class="t" style="left:582.6px;top:455.20px;font-size:10px;color:#424242;letter-spacing:-0.1px;">RUNNING PROCESSES</div>
<svg class="a" style="left:998px;top:457.5px;" width="6" height="4" viewBox="0 0 6 4"><path d="M0.6 0.6 L3 3 L5.4 0.6" fill="none" stroke="#5cb3d0" stroke-width="1"/></svg>
<div class="a" style="left:557px;top:472px;width:456px;height:1px;background:#fcc67b;"></div>
<div class="a" style="left:565px;top:481.3px;width:441px;height:6px;background:#ececec;"></div>
<div class="t" style="left:580px;top:485.42px;font-size:6.5px;color:#333;font-weight:bold;">Name</div>
<div class="t" style="left:644px;top:485.42px;font-size:6.5px;color:#333;font-weight:bold;">Platform</div>
<div class="t" style="left:708px;top:485.42px;font-size:6.5px;color:#333;font-weight:bold;">Process ID</div>
<div class="t" style="left:766px;top:485.42px;font-size:6.5px;color:#333;font-weight:bold;">CPU</div>
<div class="t" style="left:815px;top:485.42px;font-size:6.5px;color:#333;font-weight:bold;">Memory (private</div>
<div class="t" style="left:894px;top:485.42px;font-size:6.5px;color:#333;font-weight:bold;">Memory</div>
<div class="t" style="left:942px;top:485.42px;font-size:6.5px;color:#333;font-weight:bold;">Memory</div>
<div class="t" style="left:990px;top:485.42px;font-size:6.5px;color:#333;font-weight:bold;">Di</div>
<div class="a" style="left:634px;top:484.5px;width:6px;height:1px;background:#6cb6d6;"></div>
<div class="a" style="left:698px;top:484.5px;width:6px;height:1px;background:#6cb6d6;"></div>
<div class="a" style="left:756px;top:484.5px;width:6px;height:1px;background:#6cb6d6;"></div>
<svg class="a" style="left:793px;top:483px;" width="5" height="3" viewBox="0 0 5 3"><path d="M0 0 L5 0 L2.5 3Z" fill="#1f5a73"/></svg>
<svg class="a" style="left:0px;top:0px;left:0;top:0;pointer-events:none" width="1035" height="527" viewBox="0 0 1035 527"><path d="M592.0 411.50H594.5" stroke="#999" stroke-width="0.8"/><path d="M592.0 403.92H594.5" stroke="#999" stroke-width="0.8"/><path d="M592.0 396.34H594.5" stroke="#999" stroke-width="0.8"/><path d="M592.0 388.76H594.5" stroke="#999" stroke-width="0.8"/><path d="M592.0 381.18H594.5" stroke="#999" stroke-width="0.8"/><path d="M592.0 373.60H594.5" stroke="#999" stroke-width="0.8"/><path d="M592.0 366.02H594.5" stroke="#999" stroke-width="0.8"/><path d="M592.0 358.44H594.5" stroke="#999" stroke-width="0.8"/><path d="M592.0 350.86H594.5" stroke="#999" stroke-width="0.8"/><path d="M592.0 343.28H594.5" stroke="#999" stroke-width="0.8"/><path d="M592.0 335.70H594.5" stroke="#999" stroke-width="0.8"/><path d="M592.0 328.12H594.5" stroke="#999" stroke-width="0.8"/><path d="M592.0 320.54H594.5" stroke="#999" stroke-width="0.8"/><path d="M592.0 312.96H594.5" stroke="#999" stroke-width="0.8"/><path d="M592.0 305.38H594.5" stroke="#999" stroke-width="0.8"/><path d="M592.0 297.80H594.5" stroke="#999" stroke-width="0.8"/><path d="M592.0 290.22H594.5" stroke="#999" stroke-width="0.8"/><path d="M592.0 282.64H594.5" stroke="#999" stroke-width="0.8"/><path d="M592.0 275.06H594.5" stroke="#999" stroke-width="0.8"/><path d="M592.0 267.48H594.5" stroke="#999" stroke-width="0.8"/><path d="M592.0 259.90H594.5" stroke="#999" stroke-width="0.8"/></svg>
<div class="t" style="right:444.29999999999995px;top:408.81px;font-size:6.1px;color:#8a8a8a;letter-spacing:0.2px;">0</div>
<div class="t" style="right:444.29999999999995px;top:401.23px;font-size:6.1px;color:#8a8a8a;letter-spacing:0.2px;">100</div>
<div class="t" style="right:444.29999999999995px;top:393.65px;font-size:6.1px;color:#8a8a8a;letter-spacing:0.2px;">200</div>
<div class="t" style="right:444.29999999999995px;top:386.07px;font-size:6.1px;color:#8a8a8a;letter-spacing:0.2px;">300</div>
<div class="t" style="right:444.29999999999995px;top:378.49px;font-size:6.1px;color:#8a8a8a;letter-spacing:0.2px;">400</div>
<div class="t" style="right:444.29999999999995px;top:370.91px;font-size:6.1px;color:#8a8a8a;letter-spacing:0.2px;">500</div>
<div class="t" style="right:444.29999999999995px;top:363.33px;font-size:6.1px;color:#8a8a8a;letter-spacing:0.2px;">600</div>
<div class="t" style="right:444.29999999999995px;top:355.75px;font-size:6.1px;color:#8a8a8a;letter-spacing:0.2px;">700</div>
<div class="t" style="right:444.29999999999995px;top:348.17px;font-size:6.1px;color:#8a8a8a;letter-spacing:0.2px;">800</div>
<div class="t" style="right:444.29999999999995px;top:340.59px;font-size:6.1px;color:#8a8a8a;letter-spacing:0.2px;">900</div>
<div class="t" style="right:444.29999999999995px;top:333.01px;font-size:6.1px;color:#8a8a8a;letter-spacing:0.2px;">1,000</div>
<div class="t" style="right:444.29999999999995px;top:325.43px;font-size:6.1px;color:#8a8a8a;letter-spacing:0.2px;">1,100</div>
<div class="t" style="right:444.29999999999995px;top:317.85px;font-size:6.1px;color:#8a8a8a;letter-spacing:0.2px;">1,200</div>
<div class="t" style="right:444.29999999999995px;top:310.27px;font-size:6.1px;color:#8a8a8a;letter-spacing:0.2px;">1,300</div>
<div class="t" style="right:444.29999999999995px;top:302.69px;font-size:6.1px;color:#8a8a8a;letter-spacing:0.2px;">1,400</div>
<div class="t" style="right:444.29999999999995px;top:295.11px;font-size:6.1px;color:#8a8a8a;letter-spacing:0.2px;">1,500</div>
<div class="t" style="right:444.29999999999995px;top:287.53px;font-size:6.1px;color:#8a8a8a;letter-spacing:0.2px;">1,600</div>
<div class="t" style="right:444.29999999999995px;top:279.95px;font-size:6.1px;color:#8a8a8a;letter-spacing:0.2px;">1,700</div>
<div class="t" style="right:444.29999999999995px;top:272.37px;font-size:6.1px;color:#8a8a8a;letter-spacing:0.2px;">1,800</div>
<div class="t" style="right:444.29999999999995px;top:264.79px;font-size:6.1px;color:#8a8a8a;letter-spacing:0.2px;">1,900</div>
<div class="t" style="right:444.29999999999995px;top:257.21px;font-size:6.1px;color:#8a8a8a;letter-spacing:0.2px;">2,000</div>
<div class="a" style="left:594px;top:259.5px;width:1px;height:152.5px;background:#9a9a9a;"></div>
<div class="a" style="left:594px;top:411px;width:406px;height:1px;background:#9a9a9a;"></div>
<div class="a" style="left:619px;top:412px;width:1px;height:2.5px;background:#999;"></div>
<div class="a" style="left:670px;top:412px;width:1px;height:2.5px;background:#999;"></div>
<div class="a" style="left:721px;top:412px;width:1px;height:2.5px;background:#999;"></div>
<div class="a" style="left:771px;top:412px;width:1px;height:2.5px;background:#999;"></div>
<div class="a" style="left:822px;top:412px;width:1px;height:2.5px;background:#999;"></div>
<div class="a" style="left:873px;top:412px;width:1px;height:2.5px;background:#999;"></div>
<div class="a" style="left:924px;top:412px;width:1px;height:2.5px;background:#999;"></div>
<div class="a" style="left:974px;top:412px;width:1px;height:2.5px;background:#999;"></div>
<div class="t" style="left:533px;top:331.38px;font-size:8.4px;color:#4a4a4a;transform:rotate(-90deg);transform-origin:50% 50%;width:76px;text-align:center">Memory Usage (MB)</div>
<svg class="a" style="left:0px;top:0px;left:0;top:0" width="1035" height="527" viewBox="0 0 1035 527"><rect x="701.00" y="292.50" width="8.1" height="118.50" fill="#d4822a"/><rect x="701.00" y="369.00" width="8.1" height="42.00" fill="#327f90"/><path d="M709.10 292.50V411" stroke="#4a3520" stroke-width="0.7" stroke-dasharray="1 1"/><rect x="709.10" y="344.30" width="8.1" height="66.70" fill="#d4822a"/><rect x="709.10" y="393.50" width="8.1" height="17.50" fill="#327f90"/><path d="M717.20 344.30V411" stroke="#4a3520" stroke-width="0.7" stroke-dasharray="1 1"/><rect x="717.20" y="284.80" width="8.1" height="126.20" fill="#d4822a"/><rect x="717.20" y="396.10" width="8.1" height="14.90" fill="#327f90"/><path d="M725.30 284.80V411" stroke="#4a3520" stroke-width="0.7" stroke-dasharray="1 1"/><rect x="725.30" y="361.90" width="8.1" height="49.10" fill="#d4822a"/><rect x="725.30" y="396.80" width="8.1" height="14.20" fill="#327f90"/><path d="M733.40 361.90V411" stroke="#4a3520" stroke-width="0.7" stroke-dasharray="1 1"/><rect x="733.40" y="366.90" width="8.1" height="44.10" fill="#d4822a"/><rect x="733.40" y="396.80" width="8.1" height="14.20" fill="#327f90"/><path d="M741.50 366.90V411" stroke="#4a3520" stroke-width="0.7" stroke-dasharray="1 1"/><rect x="751.60" y="292.00" width="8.1" height="119.00" fill="#d4822a"/><rect x="751.60" y="369.00" width="8.1" height="42.00" fill="#327f90"/><path d="M759.70 292.00V411" stroke="#4a3520" stroke-width="0.7" stroke-dasharray="1 1"/><rect x="759.70" y="344.30" width="8.1" height="66.70" fill="#d4822a"/><rect x="759.70" y="393.50" width="8.1" height="17.50" fill="#327f90"/><path d="M767.80 344.30V411" stroke="#4a3520" stroke-width="0.7" stroke-dasharray="1 1"/><rect x="767.80" y="285.30" width="8.1" height="125.70" fill="#d4822a"/><rect x="767.80" y="396.10" width="8.1" height="14.90" fill="#327f90"/><path d="M775.90 285.30V411" stroke="#4a3520" stroke-width="0.7" stroke-dasharray="1 1"/><rect x="775.90" y="366.40" width="8.1" height="44.60" fill="#d4822a"/><rect x="775.90" y="396.80" width="8.1" height="14.20" fill="#327f90"/><path d="M784.00 366.40V411" stroke="#4a3520" stroke-width="0.7" stroke-dasharray="1 1"/><rect x="784.00" y="361.90" width="8.1" height="49.10" fill="#d4822a"/><rect x="784.00" y="396.80" width="8.1" height="14.20" fill="#327f90"/><path d="M792.10 361.90V411" stroke="#4a3520" stroke-width="0.7" stroke-dasharray="1 1"/><rect x="802.30" y="293.30" width="8.1" height="117.70" fill="#d4822a"/><rect x="802.30" y="369.00" width="8.1" height="42.00" fill="#327f90"/><path d="M810.40 293.30V411" stroke="#4a3520" stroke-width="0.7" stroke-dasharray="1 1"/><rect x="810.40" y="344.30" width="8.1" height="66.70" fill="#d4822a"/><rect x="810.40" y="393.50" width="8.1" height="17.50" fill="#327f90"/><path d="M818.50 344.30V411" stroke="#4a3520" stroke-width="0.7" stroke-dasharray="1 1"/><rect x="818.50" y="284.80" width="8.1" height="126.20" fill="#d4822a"/><rect x="818.50" y="396.10" width="8.1" height="14.90" fill="#327f90"/><path d="M826.60 284.80V411" stroke="#4a3520" stroke-width="0.7" stroke-dasharray="1 1"/><rect x="826.60" y="366.40" width="8.1" height="44.60" fill="#d4822a"/><rect x="826.60" y="396.80" width="8.1" height="14.20" fill="#327f90"/><path d="M834.70 366.40V411" stroke="#4a3520" stroke-width="0.7" stroke-dasharray="1 1"/><rect x="834.70" y="361.90" width="8.1" height="49.10" fill="#d4822a"/><rect x="834.70" y="396.80" width="8.1" height="14.20" fill="#327f90"/><path d="M842.80 361.90V411" stroke="#4a3520" stroke-width="0.7" stroke-dasharray="1 1"/><rect x="852.90" y="291.90" width="8.1" height="119.10" fill="#d4822a"/><rect x="852.90" y="369.00" width="8.1" height="42.00" fill="#327f90"/><path d="M861.00 291.90V411" stroke="#4a3520" stroke-width="0.7" stroke-dasharray="1 1"/><rect x="861.00" y="344.10" width="8.1" height="66.90" fill="#d4822a"/><rect x="861.00" y="393.50" width="8.1" height="17.50" fill="#327f90"/><path d="M869.10 344.10V411" stroke="#4a3520" stroke-width="0.7" stroke-dasharray="1 1"/><rect x="869.10" y="285.50" width="8.1" height="125.50" fill="#d4822a"/><rect x="869.10" y="396.10" width="8.1" height="14.90" fill="#327f90"/><path d="M877.20 285.50V411" stroke="#4a3520" stroke-width="0.7" stroke-dasharray="1 1"/><rect x="877.20" y="366.00" width="8.1" height="45.00" fill="#d4822a"/><rect x="877.20" y="396.80" width="8.1" height="14.20" fill="#327f90"/><path d="M885.30 366.00V411" stroke="#4a3520" stroke-width="0.7" stroke-dasharray="1 1"/><rect x="885.30" y="361.90" width="8.1" height="49.10" fill="#d4822a"/><rect x="885.30" y="396.80" width="8.1" height="14.20" fill="#327f90"/><path d="M893.40 361.90V411" stroke="#4a3520" stroke-width="0.7" stroke-dasharray="1 1"/><rect x="903.50" y="291.00" width="8.1" height="120.00" fill="#d4822a"/><rect x="903.50" y="369.00" width="8.1" height="42.00" fill="#327f90"/><path d="M911.60 291.00V411" stroke="#4a3520" stroke-width="0.7" stroke-dasharray="1 1"/><rect x="911.60" y="344.10" width="8.1" height="66.90" fill="#d4822a"/><rect x="911.60" y="393.50" width="8.1" height="17.50" fill="#327f90"/><path d="M919.70 344.10V411" stroke="#4a3520" stroke-width="0.7" stroke-dasharray="1 1"/><rect x="919.70" y="285.50" width="8.1" height="125.50" fill="#d4822a"/><rect x="919.70" y="396.10" width="8.1" height="14.90" fill="#327f90"/><path d="M927.80 285.50V411" stroke="#4a3520" stroke-width="0.7" stroke-dasharray="1 1"/><rect x="927.80" y="366.00" width="8.1" height="45.00" fill="#d4822a"/><rect x="927.80" y="396.80" width="8.1" height="14.20" fill="#327f90"/><path d="M935.90 366.00V411" stroke="#4a3520" stroke-width="0.7" stroke-dasharray="1 1"/><rect x="935.90" y="361.90" width="8.1" height="49.10" fill="#d4822a"/><rect x="935.90" y="396.80" width="8.1" height="14.20" fill="#327f90"/><path d="M944.00 361.90V411" stroke="#4a3520" stroke-width="0.7" stroke-dasharray="1 1"/><rect x="954.30" y="291.00" width="8.1" height="120.00" fill="#d4822a"/><rect x="954.30" y="369.00" width="8.1" height="42.00" fill="#327f90"/><path d="M962.40 291.00V411" stroke="#4a3520" stroke-width="0.7" stroke-dasharray="1 1"/><rect x="962.40" y="344.10" width="8.1" height="66.90" fill="#d4822a"/><rect x="962.40" y="393.50" width="8.1" height="17.50" fill="#327f90"/><path d="M970.50 344.10V411" stroke="#4a3520" stroke-width="0.7" stroke-dasharray="1 1"/><rect x="970.50" y="285.50" width="8.1" height="125.50" fill="#d4822a"/><rect x="970.50" y="396.10" width="8.1" height="14.90" fill="#327f90"/><path d="M978.60 285.50V411" stroke="#4a3520" stroke-width="0.7" stroke-dasharray="1 1"/><rect x="978.60" y="366.00" width="8.1" height="45.00" fill="#d4822a"/><rect x="978.60" y="396.80" width="8.1" height="14.20" fill="#327f90"/><path d="M986.70 366.00V411" stroke="#4a3520" stroke-width="0.7" stroke-dasharray="1 1"/><rect x="986.70" y="361.90" width="8.1" height="49.10" fill="#d4822a"/><rect x="986.70" y="396.80" width="8.1" height="14.20" fill="#327f90"/><path d="M994.80 361.90V411" stroke="#4a3520" stroke-width="0.7" stroke-dasharray="1 1"/></svg>
<div class="a" style="left:1013px;top:176px;width:9px;height:311px;background:#ebe9e3;background-image:radial-gradient(#d8d5cc 0.6px,transparent 0.7px);background-size:2px 2px"></div>
<div class="a" style="left:1013px;top:176px;width:9px;height:65px;background:#d4d0c8;border-right:1px solid #555;border-bottom:1px solid #888"></div>
<div class="a" style="left:1013px;top:176px;width:9px;height:9px;background:#e6e3dc;border-bottom:1px solid #999;border-right:1px solid #555"></div>
<svg class="a" style="left:1015.5px;top:178.5px;" width="5" height="4" viewBox="0 0 5 4"><path d="M0 3.5 L2.5 0.5 L5 3.5Z" fill="#111"/></svg>
<div class="a" style="left:1013px;top:478px;width:9px;height:9px;background:#e6e3dc;border-top:1px solid #999;border-right:1px solid #555;border-bottom:1px solid #555"></div>
<svg class="a" style="left:1015.5px;top:481px;" width="5" height="4" viewBox="0 0 5 4"><path d="M0 0.5 L2.5 3.5 L5 0.5Z" fill="#111"/></svg>
<div class="a" style="left:159px;top:487px;width:872px;height:30px;background:#e1e1e1;"></div>
<div class="a" style="left:167px;top:487.5px;width:846px;height:8.5px;background:#d4d0c8;border-bottom:1.5px solid #6a6a6a"></div>
<div class="a" style="left:167px;top:487.5px;width:7px;height:8.5px;background:#ebe9e3;border-bottom:1.5px solid #6a6a6a"></div>
<svg class="a" style="left:168.5px;top:489.5px;" width="4" height="5" viewBox="0 0 4 5"><path d="M3.5 0 L0.5 2.5 L3.5 5Z" fill="#111"/></svg>
<div class="a" style="left:174px;top:487.5px;width:2px;height:8.5px;background:#8a8a8a;"></div>
<div class="a" style="left:997.5px;top:487.5px;width:8px;height:8.5px;background:#ebe9e3;border-left:1px solid #666"></div>
<div class="a" style="left:1005px;top:487.5px;width:8px;height:8.5px;background:#e6e3dc;border-bottom:1.5px solid #6a6a6a;border-right:1px solid #555"></div>
<svg class="a" style="left:1007px;top:489.5px;" width="4" height="5" viewBox="0 0 4 5"><path d="M0.5 0 L3.5 2.5 L0.5 5Z" fill="#111"/></svg>
<div class="a" style="left:1013px;top:487.5px;width:9px;height:9px;background:#d4d0c8;"></div>
<div class="a" style="left:168px;top:500px;width:25px;height:13px;background:#d2d2d2;background-image:radial-gradient(#e8e8e8 0.7px,transparent 0.8px);background-size:2px 2px"></div>
<div class="t" style="left:172.5px;top:504.66px;font-size:6px;color:#b5c5b5;letter-spacing:-0.3px;">SAVE</div>
<div class="a" style="left:197px;top:500px;width:33px;height:13px;background:#039aba;"></div>
<div class="t" style="left:202.8px;top:504.66px;font-size:6px;color:#e6f4f8;letter-spacing:-0.3px;">CANCEL</div>
<svg class="a" style="left:1006px;top:522px;" width="20" height="10" viewBox="0 0 20 10"><circle cx="10" cy="10" r="9.3" fill="#fff" stroke="#c9c9c9" stroke-width="0.9"/></svg>
</body></html>
